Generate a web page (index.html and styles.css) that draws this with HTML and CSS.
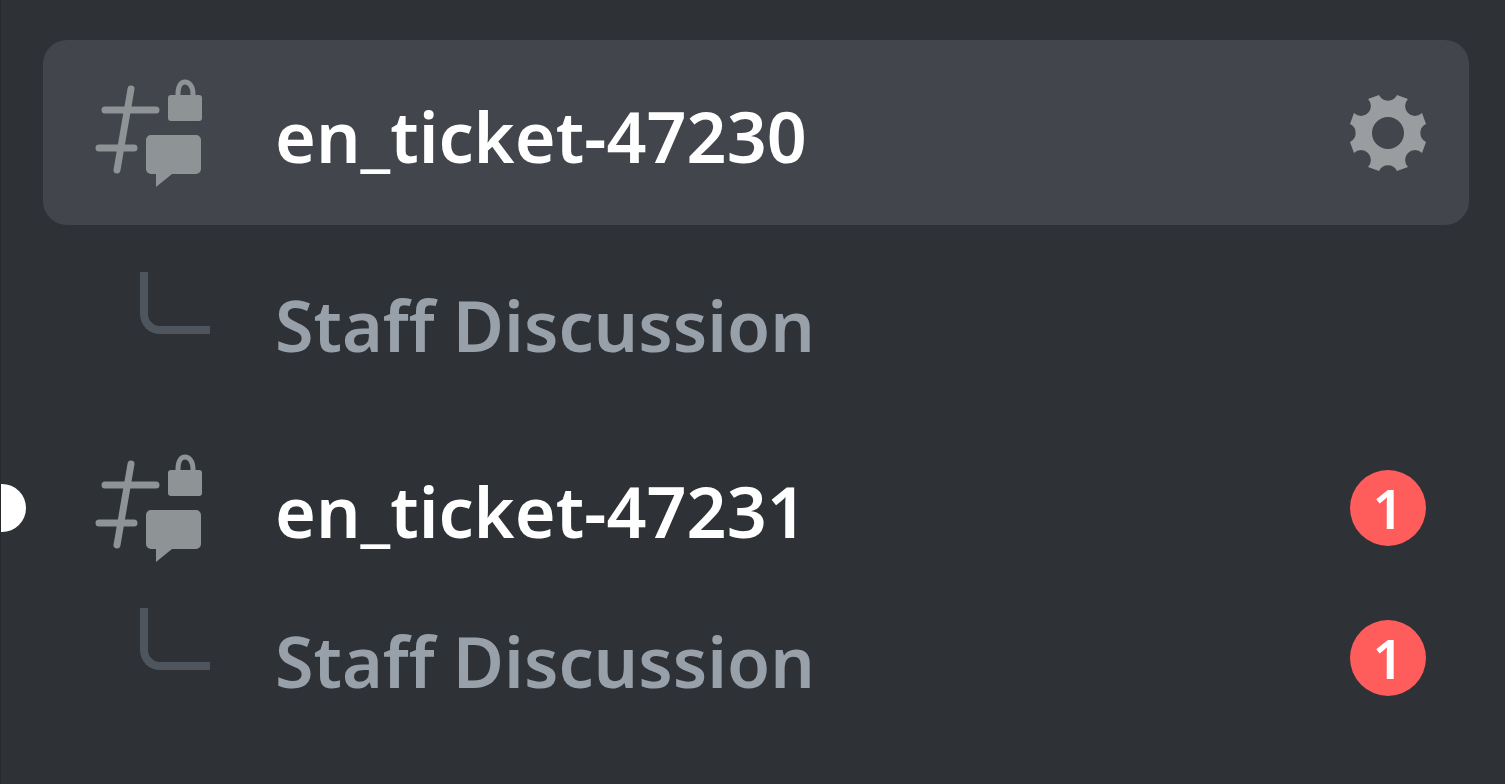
FILE: index.html
```html
<!DOCTYPE html>
<html lang="en">
<head>
  <meta charset="UTF-8">
  <meta name="viewport" content="width=device-width, initial-scale=1">
  <title>Tickets</title>
  <link rel="stylesheet" href="styles.css">
</head>
<body>
  <!-- Shared icon -->
  <svg class="sprite" aria-hidden="true">
    <symbol id="private-channel" viewBox="0 0 108 108">
      <path d="M36 10 22 91M10 31h51M4 69h35" fill="none" stroke="currentColor" stroke-width="7" stroke-linecap="round"/>
      <path d="M83 19v-4c0-8 3-12 7-12s8 4 8 12v4" fill="none" stroke="currentColor" stroke-width="5"/>
      <rect x="73" y="16" width="34" height="26" rx="3" fill="currentColor"/>
      <path d="M56 56h45a5 5 0 0 1 5 5v29a5 5 0 0 1-5 5H77L61 108V95h-5a5 5 0 0 1-5-5V61a5 5 0 0 1 5-5z" fill="currentColor"/>
    </symbol>
  </svg>

  <nav aria-label="Tickets">
    <ul class="channel-list">
      <li class="group">
        <div class="channel active">
          <a class="channel-link" href="#ticket-47230">
            <svg class="icon" aria-hidden="true"><use href="#private-channel"/></svg>
            <span class="name">en_ticket-47230</span>
          </a>
          <button class="settings" type="button" aria-label="Edit channel">
            <svg viewBox="-38 -38 76 76" aria-hidden="true">
              <path fill="currentColor" fill-rule="evenodd" d="M38-9A10 10 0 0 0 38 9L34 20A9 9 0 0 0 20 34L9 38A10 10 0 0 0-9 38L-20 34A9 9 0 0 0-34 20L-38 9A10 10 0 0 0-38-9L-34-20A9 9 0 0 0-20-34L-9-38A10 10 0 0 0 9-38L20-34A9 9 0 0 0 34-20ZM16 0A16 16 0 1 0-16 0A16 16 0 1 0 16 0Z"/>
            </svg>
          </button>
        </div>
        <div class="channel thread">
          <a class="channel-link" href="#thread-47230">
            <span class="branch"></span>
            <span class="name">Staff Discussion</span>
          </a>
        </div>
      </li>

      <li class="group">
        <div class="channel unread">
          <a class="channel-link" href="#ticket-47231">
            <svg class="icon" aria-hidden="true"><use href="#private-channel"/></svg>
            <span class="name">en_ticket-47231</span>
            <span class="badge">1</span>
          </a>
        </div>
        <div class="channel thread">
          <a class="channel-link" href="#thread-47231">
            <span class="branch"></span>
            <span class="name">Staff Discussion</span>
            <span class="badge">1</span>
          </a>
        </div>
      </li>
    </ul>
  </nav>
</body>
</html>
```
FILE: styles.css
```css
* {
  margin: 0;
  padding: 0;
  box-sizing: border-box;
}

body {
  min-height: 100vh;
  background: #2e3136;
  border-left: 1px solid #27292d;
  font-family: "Segoe UI", "Noto Sans", "Open Sans", sans-serif;
  font-weight: 600;
}

.sprite {
  display: none;
}

/* Channel list */
.channel-list {
  list-style: none;
  display: flex;
  flex-direction: column;
  gap: 36px;
  padding: 40px 36px 40px 42px;
}

.channel {
  position: relative;
  display: flex;
  align-items: center;
  min-height: 150px;
  padding-right: 43px;
  border-radius: 24px;
  color: #8e9396;
}

.channel.active {
  min-height: 185px;
  margin-bottom: 22px;
  background: #42454c;
}

.channel-link {
  flex: 1;
  display: flex;
  align-items: center;
  padding-left: 52px;
  color: inherit;
  text-decoration: none;
}

.icon {
  flex: none;
  width: 108px;
  height: 108px;
}

.name {
  flex: 1;
  margin-left: 72px;
  padding-top: 6px;
  font-size: 70px;
  line-height: 94px;
  white-space: nowrap;
}

.active .name,
.unread .name {
  color: #fff;
}

.thread .name {
  color: #98a1aa;
}

/* Line from a channel down to its thread */
.branch {
  align-self: flex-start;
  width: 70px;
  height: 62px;
  margin-left: 45px;
  border-left: 8px solid #4f555d;
  border-bottom: 8px solid #4f555d;
  border-bottom-left-radius: 20px;
}

.branch + .name {
  margin-left: 65px;
}

.unread::before {
  content: "";
  position: absolute;
  left: -42px;
  width: 25px;
  height: 48px;
  background: #fff;
  border-radius: 0 24px 24px 0;
}

/* Right side */
.settings {
  width: 76px;
  height: 76px;
  border: none;
  background: none;
  color: #999d9f;
  cursor: pointer;
}

.settings svg {
  display: block;
}

.badge {
  width: 76px;
  height: 76px;
  border-radius: 50%;
  background: #ff5c5c;
  color: #fff;
  font-size: 54px;
  line-height: 76px;
  text-align: center;
}
```
